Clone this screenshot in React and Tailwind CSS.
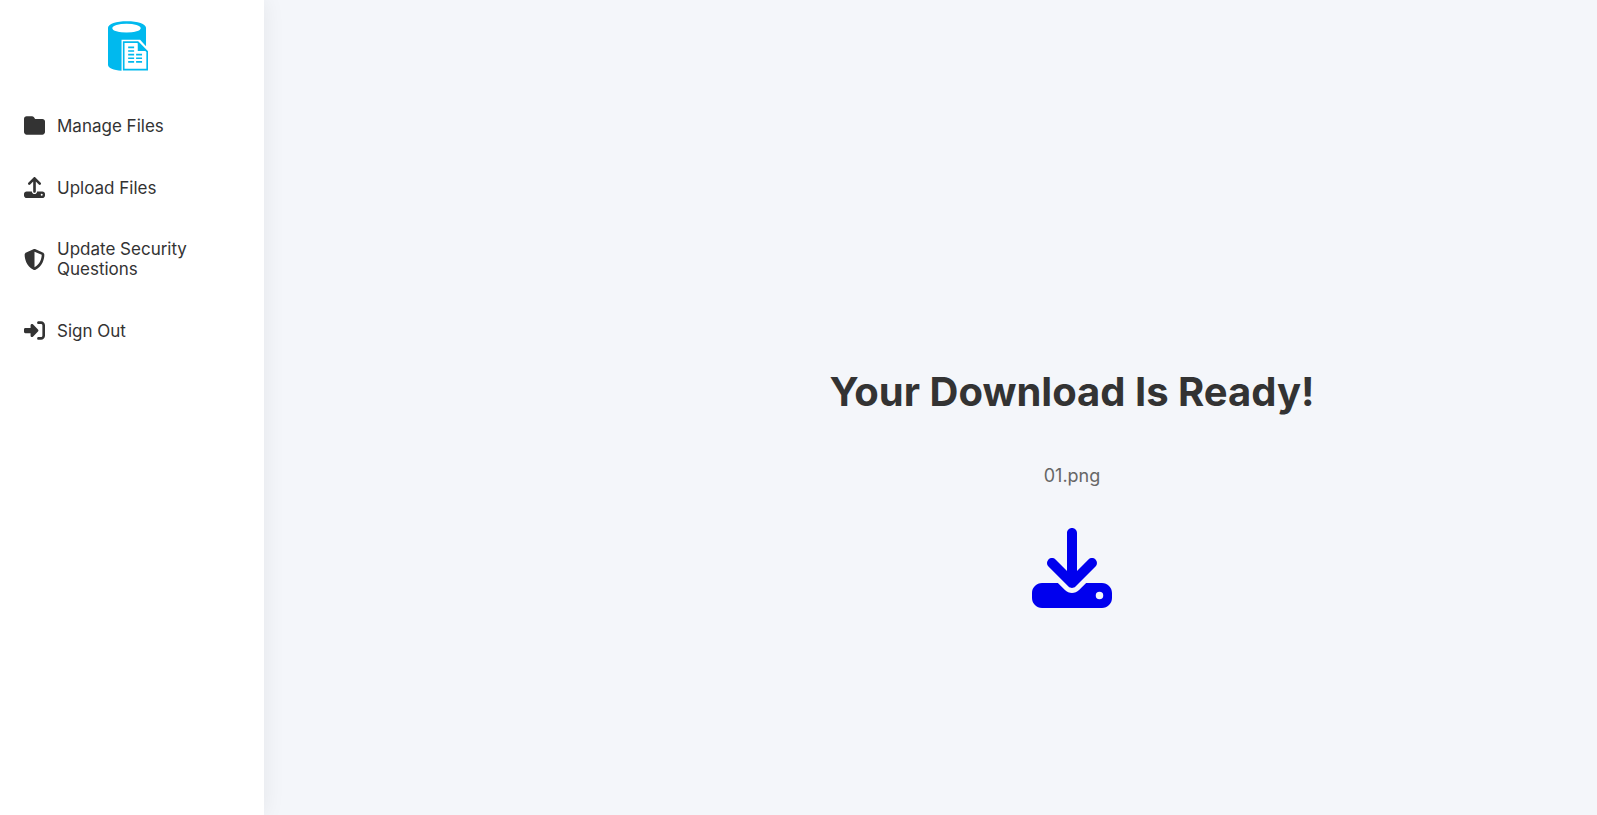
import React from 'react';
import { FaFolder, FaUpload, FaShieldHalved, FaRightToBracket, FaDownload } from 'react-icons/fa6';

const menuItems = [
  { label: 'Manage Files', href: '#manage', icon: FaFolder },
  { label: 'Upload Files', href: '#upload', icon: FaUpload },
  { label: 'Update Security Questions', href: '#security', icon: FaShieldHalved },
  { label: 'Sign Out', href: '#signout', icon: FaRightToBracket },
];

const Logo = () => (
  <svg className="w-10 h-[50px]" viewBox="53 34 121 150" aria-hidden="true">
    <path fill="#00b9ee" d="M53 54C53 42 78 34 110.500 34S168 42 168 54V110L150 90H94V184C70 183 53 176 53 166Z" />
    <ellipse cx="109" cy="55" rx="43" ry="13" fill="#fff" />
    <path fill="#fff" stroke="#00b9ee" strokeWidth="5" d="M100.500 97.500H143L171.500 126V180.500H100.500Z" />
    <path fill="#00b9ee" d="M143 95V124H172Z" />
    <path
      stroke="#00b9ee"
      strokeWidth="5"
      d="M114 113H132M114 124H132M114 135H132M114 146H132M114 157H132M138 135H156M138 146H156M138 157H156"
    />
  </svg>
);

const Sidebar = () => (
  <aside className="w-[264px] shrink-0 bg-white pl-6 pr-8 pt-[21px] shadow-[2px_0_20px_rgba(0,0,0,0.06)]">
    <div className="flex justify-center">
      <Logo />
    </div>
    <nav className="mt-11">
      <ul className="flex flex-col gap-[41px]">
        {menuItems.map(({ label, href, icon: Icon }) => (
          <li key={label}>
            <a href={href} className="flex items-center gap-3 text-[17px] leading-5 text-[#333]">
              <Icon className="size-[21px] shrink-0" />
              <span>{label}</span>
            </a>
          </li>
        ))}
      </ul>
    </nav>
  </aside>
);

const App = () => {
  const fileName = '01.png';

  return (
    <div className="flex min-h-screen bg-[#f4f6fa] font-['Inter',sans-serif]">
      <Sidebar />
      <main className="ml-[283px] flex flex-1 flex-col items-center justify-center pt-40">
        <h1 className="text-[40px] leading-12 font-bold text-[#333]">Your Download Is Ready!</h1>
        <p className="mt-12 text-lg leading-6 text-[#666]">{fileName}</p>
        <a href="#download" aria-label={`Download ${fileName}`} className="mt-10 text-[#0000ee]">
          <FaDownload className="size-20" />
        </a>
      </main>
    </div>
  );
};

export default App;
